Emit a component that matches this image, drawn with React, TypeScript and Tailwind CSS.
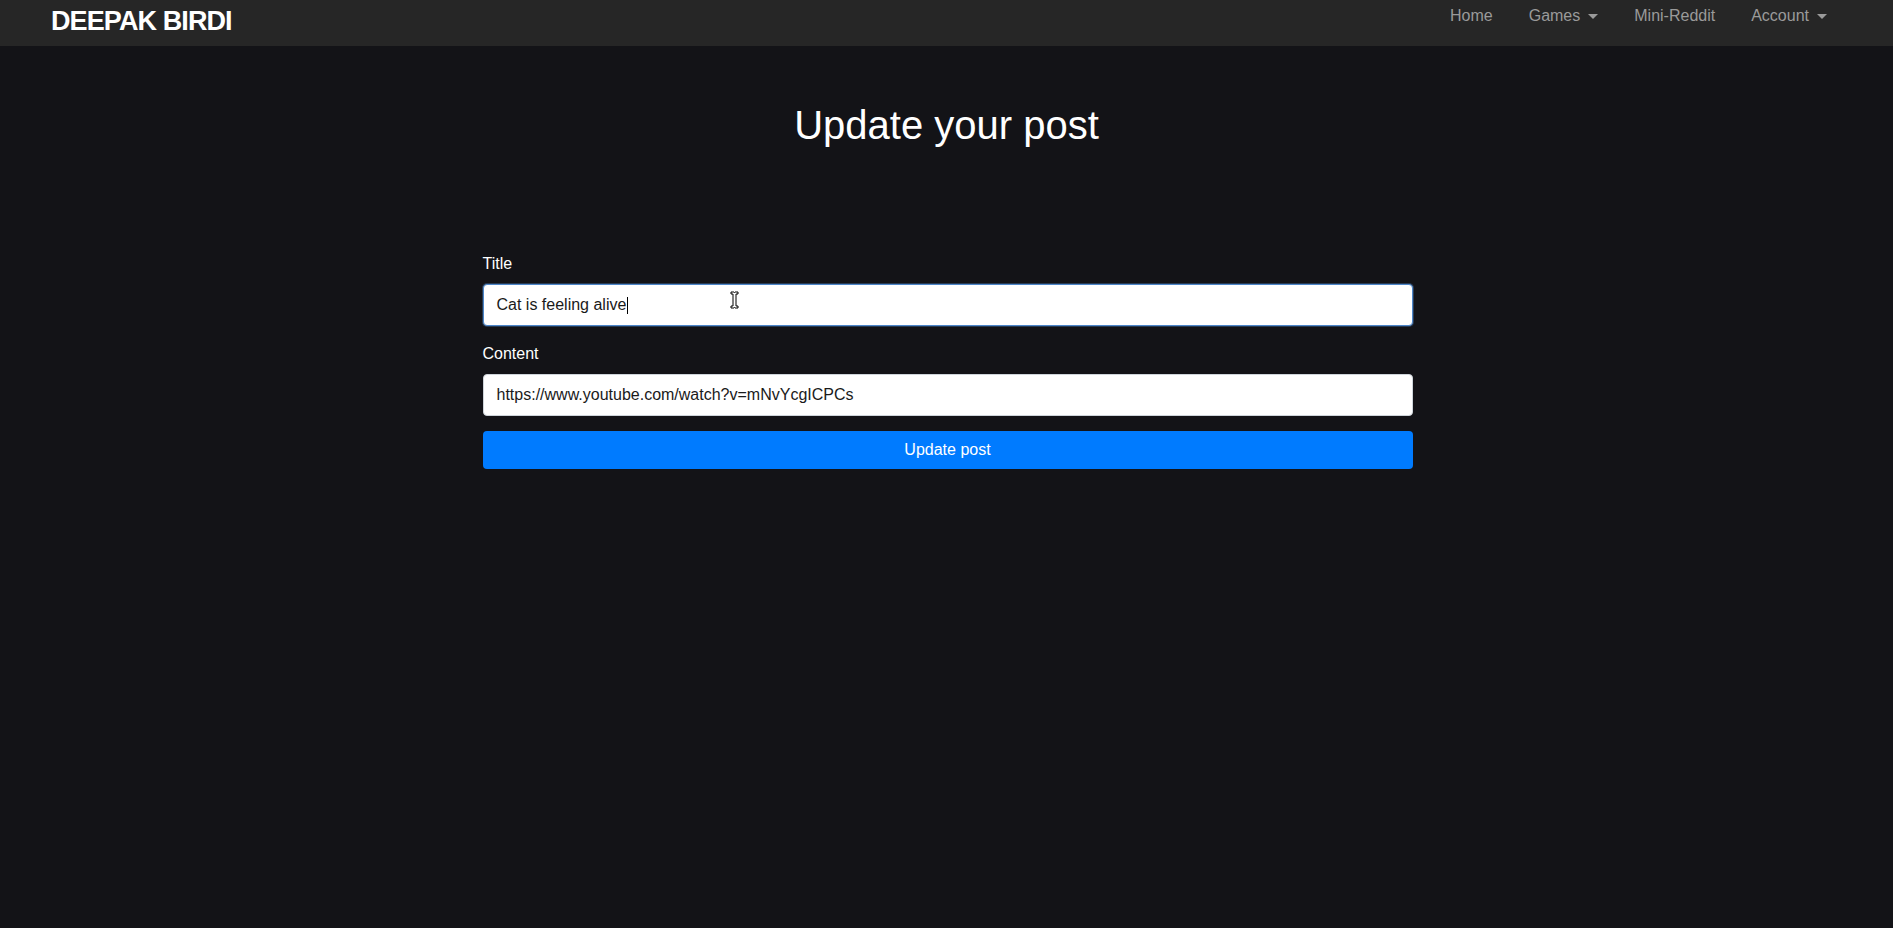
import React from "react";

const font = { fontFamily: '"Liberation Sans", Arial, sans-serif' };

function Caret() {
  return (
    <span className="ml-2 inline-block h-0 w-0 border-x-[5px] border-t-[5px] border-x-transparent border-t-[#9a9a9a] align-middle" />
  );
}

function IBeam() {
  return (
    <svg width="9" height="18" viewBox="0 0 9 18" className="absolute left-[246px] top-[6px]">
      <path
        d="M1 1h3l0.5 0.5L5 1h3v2H6v12h2v2H5l-0.5-0.5L4 17H1v-2h2V3H1z"
        fill="#fff"
        stroke="#000"
        strokeWidth="1"
      />
    </svg>
  );
}

export default function App() {
  return (
    <div className="min-h-[928px] bg-[#131317] text-white" style={font}>
      {/* Navbar */}
      <nav className="flex h-[46px] items-start justify-between bg-[#262626]">
        <a className="ml-[51px] mt-[8px] text-[27px] font-bold leading-none tracking-[-0.9px] text-white">
          DEEPAK BIRDI
        </a>
        <ul className="flex gap-[36px] pr-[66px] pt-[4px] text-base leading-6 text-[#9a9a9a]">
          <li>Home</li>
          <li className="flex items-center">
            Games
            <Caret />
          </li>
          <li>Mini-Reddit</li>
          <li className="flex items-center">
            Account
            <Caret />
          </li>
        </ul>
      </nav>

      {/* Header */}
      <h1 className="mt-[55px] text-center text-[40px] font-normal leading-[48px] text-white">
        Update your post
      </h1>

      {/* Form */}
      <form className="mx-auto mt-[103px] w-[930px] translate-x-[1px]">
        <div className="mb-4">
          <label className="mb-2 block text-base leading-6 text-white">Title</label>
          <div className="relative flex h-[42px] items-center rounded-[4px] border border-[#4d86c9] bg-white px-[13px] text-base leading-6 text-[#1a1a1a] shadow-[0_0_0_1px_rgba(77,134,201,0.35)]">
            <span>Cat is feeling alive</span>
            <span className="ml-[1px] inline-block h-[17px] w-px bg-black" />
            <IBeam />
          </div>
        </div>
        <div className="mb-[15px]">
          <label className="mb-2 block text-base leading-6 text-white">Content</label>
          <div className="flex h-[42px] items-center rounded-[4px] border border-[#ced4da] bg-white px-[13px] text-base leading-6 text-[#1a1a1a]">
            https://www.youtube.com/watch?v=mNvYcgICPCs
          </div>
        </div>
        <button
          type="button"
          className="block h-[38px] w-full rounded-[4px] bg-[#007bff] text-base leading-6 text-white"
        >
          Update post
        </button>
      </form>
    </div>
  );
}
